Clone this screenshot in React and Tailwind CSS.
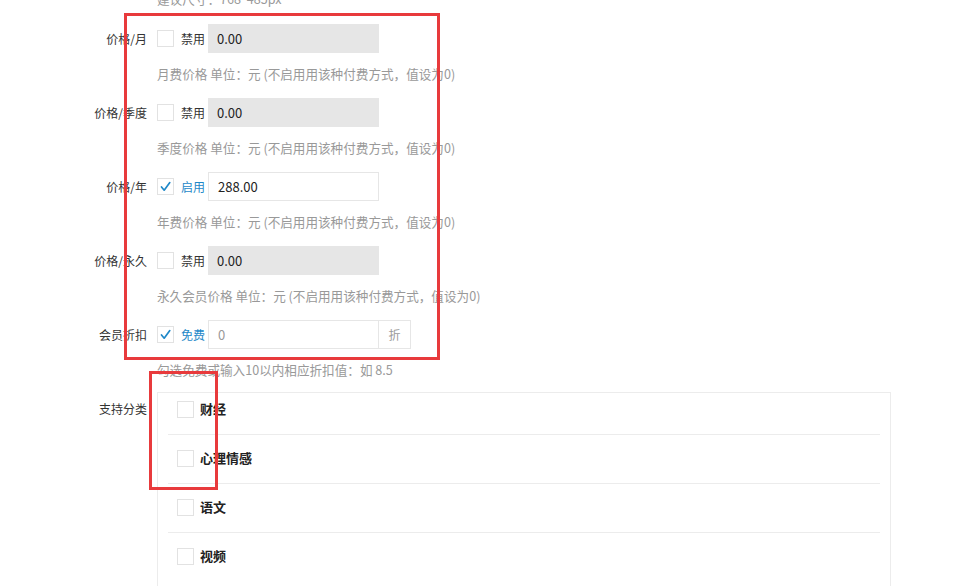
import React from 'react';

const font = { fontFamily: '"Noto Sans CJK SC", "Noto Sans", sans-serif' };

const CheckBox = ({ checked, size = 'w-[17px] h-[17px]' }) => (
    <span className={`${size} shrink-0 border border-[#e2e2e2] bg-white flex items-center justify-center`}>
        {checked && (
            <svg width="13" height="13" viewBox="0 0 13 13">
                <path d="M2.5 7 L5.2 10.2 L10.8 2.6" fill="none" stroke="#1e88c8" strokeWidth="1.7" strokeLinecap="round" strokeLinejoin="round" />
            </svg>
        )}
    </span>
);

const PriceRow = ({ label, checked, state, value, hint, addon, placeholder }) => (
    <div className="mb-[15px]">
        <div className="flex items-center h-[29px]">
            <div className="w-[147px] text-right text-[12px] text-[#333]">{label}</div>
            <div className="ml-[10px] flex items-center">
                <CheckBox checked={checked} />
                <span className={`ml-[7px] w-[27px] text-[12px] ${checked ? 'text-[#1e88c8]' : 'text-[#333]'}`}>{state}</span>
                <div className="flex h-[29px]">
                    <div
                        className={`w-[171px] h-[29px] pl-[9px] flex items-center text-[13px] ${
                            checked ? 'bg-white border border-[#e6e6e6]' : 'bg-[#e6e6e6]'
                        } ${placeholder ? 'text-[#999]' : 'text-[#222]'}`}
                    >
                        {value}
                    </div>
                    {addon && (
                        <div className="w-[32px] h-[29px] border border-l-0 border-[#e6e6e6] flex items-center justify-center text-[12px] text-[#999]">
                            {addon}
                        </div>
                    )}
                </div>
            </div>
        </div>
        <div className="ml-[157px] mt-[12px] h-[18px] leading-[18px] text-[12.6px] text-[#999] whitespace-nowrap">{hint}</div>
    </div>
);

const categories = ['财经', '心理情感', '语文', '视频'];

const App = () => {
    return (
        <div className="relative w-[970px] h-[586px] overflow-hidden bg-white" style={font}>
            <div className="-mt-[10px] h-[18px] leading-[18px] ml-[157px] text-[12.6px] text-[#999]">建议尺寸：768*485px</div>
            <div className="mt-[16px]">
                <PriceRow label="价格/月" state="禁用" value="0.00" hint="月费价格 单位：元 (不启用用该种付费方式，值设为0)" />
                <PriceRow label="价格/季度" state="禁用" value="0.00" hint="季度价格 单位：元 (不启用用该种付费方式，值设为0)" />
                <PriceRow label="价格/年" checked state="启用" value="288.00" hint="年费价格 单位：元 (不启用用该种付费方式，值设为0)" />
                <PriceRow label="价格/永久" state="禁用" value="0.00" hint="永久会员价格 单位：元 (不启用用该种付费方式，值设为0)" />
                <div className="-mb-[2px]">
                    <PriceRow label="会员折扣" checked state="免费" value="0" placeholder addon="折" hint="勾选免费或输入10以内相应折扣值：如 8.5" />
                </div>
            </div>

            <div className="flex">
                <div className="w-[147px] text-right text-[12px] text-[#333] pt-[8px] leading-[18px]">支持分类</div>
                <div className="ml-[10px] w-[734px] h-[300px] border border-[#ececec] px-[10px]">
                    {categories.map((c, i) => (
                        <div
                            key={c}
                            className={`flex items-center pl-[9px] pb-[16px] ${i === 0 ? 'pt-[7px]' : 'pt-[14px]'} ${
                                i < categories.length - 1 ? 'border-b border-[#ececec]' : ''
                            }`}
                        >
                            <CheckBox />
                            <span className="ml-[6px] text-[13px] font-bold text-[#222] leading-[18px]">{c}</span>
                        </div>
                    ))}
                </div>
            </div>

            <div className="absolute left-[124px] top-[13px] w-[316px] h-[347px] border-[3px] border-[#e83a3c]" />
            <div className="absolute left-[149px] top-[371px] w-[69px] h-[119px] border-[3px] border-[#e83a3c]" />
        </div>
    );
};

export default App;
